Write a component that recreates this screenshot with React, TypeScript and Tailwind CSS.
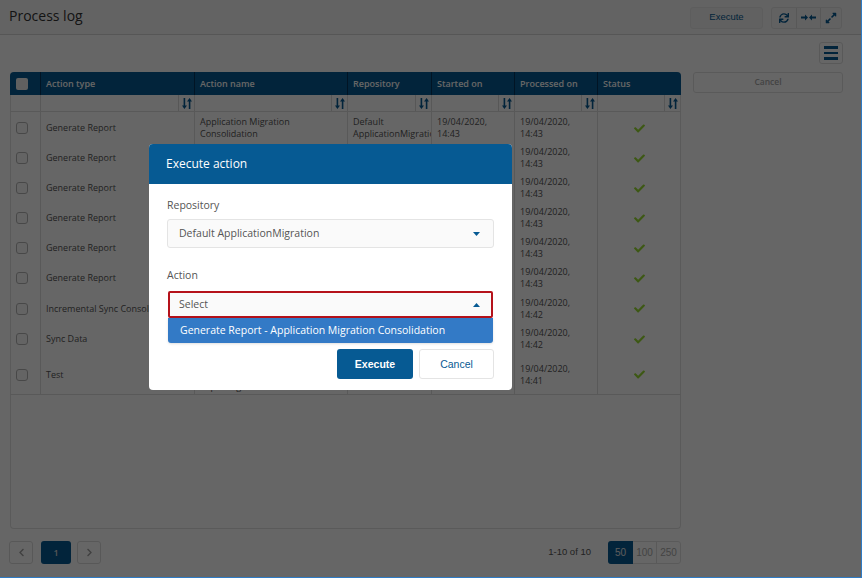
import { FaCheck, FaChevronLeft, FaChevronRight, FaExpandAlt, FaSync } from 'react-icons/fa'

const rows = [
  { type: 'Generate Report', name: 'Application Migration Consolidation', time: '14:43', h: 'h-[30px]' },
  { type: 'Generate Report', name: 'Application Migration Consolidation', time: '14:43', h: 'h-[30px]' },
  { type: 'Generate Report', name: 'Application Migration Consolidation', time: '14:43', h: 'h-[30px]' },
  { type: 'Generate Report', name: 'Application Migration Consolidation', time: '14:43', h: 'h-[30px]' },
  { type: 'Generate Report', name: 'Application Migration Consolidation', time: '14:43', h: 'h-[30px]' },
  { type: 'Generate Report', name: 'Application Migration Consolidation', time: '14:43', h: 'h-[30px]' },
  { type: 'Incremental Sync Consolidation', name: 'Application Migration Consolidation', time: '14:42', h: 'h-[31px]' },
  { type: 'Sync Data', name: 'Application Migration Consolidation', time: '14:42', h: 'h-[30px]' },
  { type: 'Test', name: 'Application Migration\nConsolidation Test\nReporting', time: '14:41', h: 'h-[41px]' },
]

const gridCols = 'grid grid-cols-[30px_154px_153px_84px_83px_83px_83px]'

function SortIcon() {
  return (
    <span className="flex w-[16px] h-full items-center justify-center border-l border-[#d9d9d9] text-[#065a93]">
      <svg width="10" height="11" viewBox="0 0 10 11" fill="currentColor">
        <path d="M1.6 0h1.6v7.6H5L2.4 11 0 7.6h1.6zM6.8 11h1.6V3.4H10L7.6 0 5 3.4h1.8z" />
      </svg>
    </span>
  )
}

function FilterCell() {
  return (
    <div className="flex justify-end border-l border-[#dcdcdc] h-full">
      <SortIcon />
    </div>
  )
}

function Checkbox() {
  return <span className="block w-[12px] h-[12px] rounded-[3px] border border-[#b5b5b5] bg-[#fafafa]" />
}

function Caret({ up }: { up?: boolean }) {
  return (
    <svg width="7" height="4" viewBox="0 0 7 4" className="text-[#065a93]">
      <path d={up ? 'M3.5 0 L7 4 L0 4 Z' : 'M0 0 L7 0 L3.5 4 Z'} fill="currentColor" />
    </svg>
  )
}

export default function App() {
  return (
    <div className="relative w-[862px] h-[578px] overflow-hidden bg-white font-['Open_Sans',sans-serif] text-[#555]">
      <div className="flex h-[35px] items-center justify-between border-b border-[#d8d8d8] bg-[#f7f7f7] pl-[9px] pr-[20px]">
        <h1 className="pb-[3px] text-[14px] text-[#333]">Process log</h1>
        <div className="flex items-center gap-[8px] pt-[1px]">
          <button className="w-[73px] h-[22px] rounded-[3px] border border-[#e8e8e8] bg-[#f2f2f2] font-['Liberation_Sans',sans-serif] text-[9.5px] text-[#065a93]">Execute</button>
          <div className="flex h-[22px] rounded-[3px] border border-[#e4e4e4] bg-[#f5f5f5] text-[#065a93]">
            <span className="flex w-[24px] items-center justify-center"><FaSync size={10} /></span>
            <span className="flex w-[24px] items-center justify-center border-l border-[#dcdcdc]">
              <svg width="15" height="7" viewBox="0 0 15 7" fill="currentColor">
                <path d="M0 2.6h4V0.4L7 3.5 4 6.6V4.4H0zM15 2.6h-4V0.4L8 3.5l3 3.1V4.4h4z" />
              </svg>
            </span>
            <span className="flex w-[21px] items-center justify-center border-l border-[#dcdcdc]"><FaExpandAlt size={12} /></span>
          </div>
        </div>
      </div>

      <div className="flex pl-[10px] pr-[19px]">
        <div className="w-[671px] pt-[37px]">
          <div className="h-[457px] rounded-[4px] border border-[#e2e2e2] border-t-0">
            <div className={`${gridCols} h-[23px] -mx-px rounded-t-[4px] bg-[#065a93] text-[9px] font-semibold text-white`}>
              <div className="flex items-center pl-[6px]"><span className="block w-[12px] h-[12px] rounded-[2px] bg-[#f0f0f0]" /></div>
              {['Action type', 'Action name', 'Repository', 'Started on', 'Processed on', 'Status'].map((label) => (
                <div key={label} className="flex items-center border-l border-[#03345a] pl-[5px]">{label}</div>
              ))}
            </div>
            <div className={`${gridCols} h-[17px] -mx-px border-b border-[#dedede]`}>
              <div />
              {[0, 1, 2, 3, 4, 5].map((i) => <FilterCell key={i} />)}
            </div>
            {rows.map((row, i) => (
              <div key={i} className={`${gridCols} ${row.h} -mx-px text-[9px] leading-[12px] text-[#555]`}>
                <div className="flex items-center pl-[6px] pt-[2px]"><Checkbox /></div>
                <div className="flex items-center overflow-hidden whitespace-nowrap border-l border-[#dedede] pl-[5px] pt-[2px]">{row.type}</div>
                <div className="flex items-center whitespace-pre-line border-l border-[#dedede] pl-[5px] pr-[8px] pt-[2px]">{row.name}</div>
                <div className="flex items-center overflow-hidden border-l border-[#dedede] pl-[5px] pt-[2px]">Default ApplicationMigration</div>
                <div className="flex items-center border-l border-[#dedede] pl-[5px] pt-[2px]">19/04/2020,<br />{row.time}</div>
                <div className="flex items-center border-l border-[#dedede] pl-[5px] pt-[2px]">19/04/2020,<br />{row.time}</div>
                <div className="flex items-center justify-center border-l border-[#dedede] pt-[2px] text-[#99dd33]"><FaCheck size={11} /></div>
              </div>
            ))}
            <div className="-mx-px border-t border-[#dedede]" />
          </div>

          <div className="mt-[12px] -ml-px flex items-center justify-between">
            <div className="flex items-center gap-[6px]">
              <span className="flex w-[24px] h-[23px] items-center justify-center rounded-[3px] border border-[#dcdcdc] text-[#a0a0a0]"><FaChevronLeft size={9} /></span>
              <span className="ml-[2px] flex w-[30px] h-[23px] items-center justify-center rounded-[3px] bg-[#065a93] text-[9px] font-semibold text-[#d9d9d9]">1</span>
              <span className="flex w-[24px] h-[23px] items-center justify-center rounded-[3px] border border-[#dcdcdc] text-[#a0a0a0]"><FaChevronRight size={9} /></span>
            </div>
            <div className="flex items-center gap-[17px] font-['Liberation_Sans',sans-serif] text-[10px]">
              <span className="text-[9.5px] text-[#555]">1-10 of 10</span>
              <div className="flex h-[23px] rounded-[3px] border border-[#e2e2e2] text-[#aaa]">
                <span className="-my-px -ml-px flex w-[25px] items-center justify-center rounded-l-[3px] bg-[#065a93] text-[#e6e6e6]">50</span>
                <span className="flex w-[24px] items-center justify-center border-r border-[#dedede]">100</span>
                <span className="flex w-[23px] items-center justify-center">250</span>
              </div>
            </div>
          </div>
        </div>

        <div className="ml-[12px] flex flex-1 flex-col items-end pt-[7px]">
          <span className="flex w-[24px] h-[22px] items-center justify-center rounded-[3px] border border-[#dfdfdf] text-[#065a93]">
            <span className="flex w-[14px] flex-col gap-[3px]">
              <span className="h-[2.5px] bg-current" />
              <span className="h-[2.5px] bg-current" />
              <span className="h-[2.5px] bg-current" />
            </span>
          </span>
          <button className="mt-[8px] h-[21px] w-full rounded-[3px] border border-[#e2e2e2] text-[8.5px] font-semibold text-[#a8a8a8]">Cancel</button>
        </div>
      </div>

      {/* dimmed backdrop + dialog */}
      <div className="absolute inset-0 bg-black/60 border-r border-b border-[#2f7bc4]" />
      <div className="absolute left-[149px] top-[144px] w-[363px] h-[246px] rounded-[4px] bg-white">
        <div className="flex h-[40px] items-center rounded-t-[4px] bg-[#065a93] pl-[17px] text-[12px] font-medium text-white">Execute action</div>
        <div className="px-[18px] pt-[14px] text-[10.5px] text-[#555]">
          <div className="leading-[15px]">Repository</div>
          <div className="mt-[6px] flex h-[29px] items-center justify-between rounded-[3px] border border-[#e4e4e4] bg-[#fafafa] pl-[11px] pr-[13px] pt-[1px] text-[#555]">
            <span>Default ApplicationMigration</span>
            <Caret />
          </div>
          <div className="mt-[20px] leading-[15px]">Action</div>
          <div className="relative mt-[8px]">
            <div className="mx-[1px] flex h-[27px] items-center justify-between border-2 border-[#b5121b] rounded-[2px] bg-[#fafafa] pl-[9px] pr-[11px]">
              <span>Select</span>
              <Caret up />
            </div>
            <div className="absolute left-[1px] right-[1px] top-[27px] flex h-[25px] items-center rounded-b-[3px] bg-[#337ac6] pl-[12px] pt-[1px] text-[10.5px] font-medium text-white shadow-sm">
              Generate Report - Application Migration Consolidation
            </div>
          </div>
          <div className="mt-[31px] flex justify-end gap-[6px] font-['Liberation_Sans',sans-serif]">
            <button className="h-[30px] w-[76px] rounded-[3px] bg-[#065a93] pt-[1px] text-[10.5px] font-bold text-white">Execute</button>
            <button className="h-[30px] w-[75px] rounded-[3px] border border-[#e4e4e4] bg-white pt-[1px] text-[10.5px] text-[#065a93]">Cancel</button>
          </div>
        </div>
      </div>
    </div>
  )
}
